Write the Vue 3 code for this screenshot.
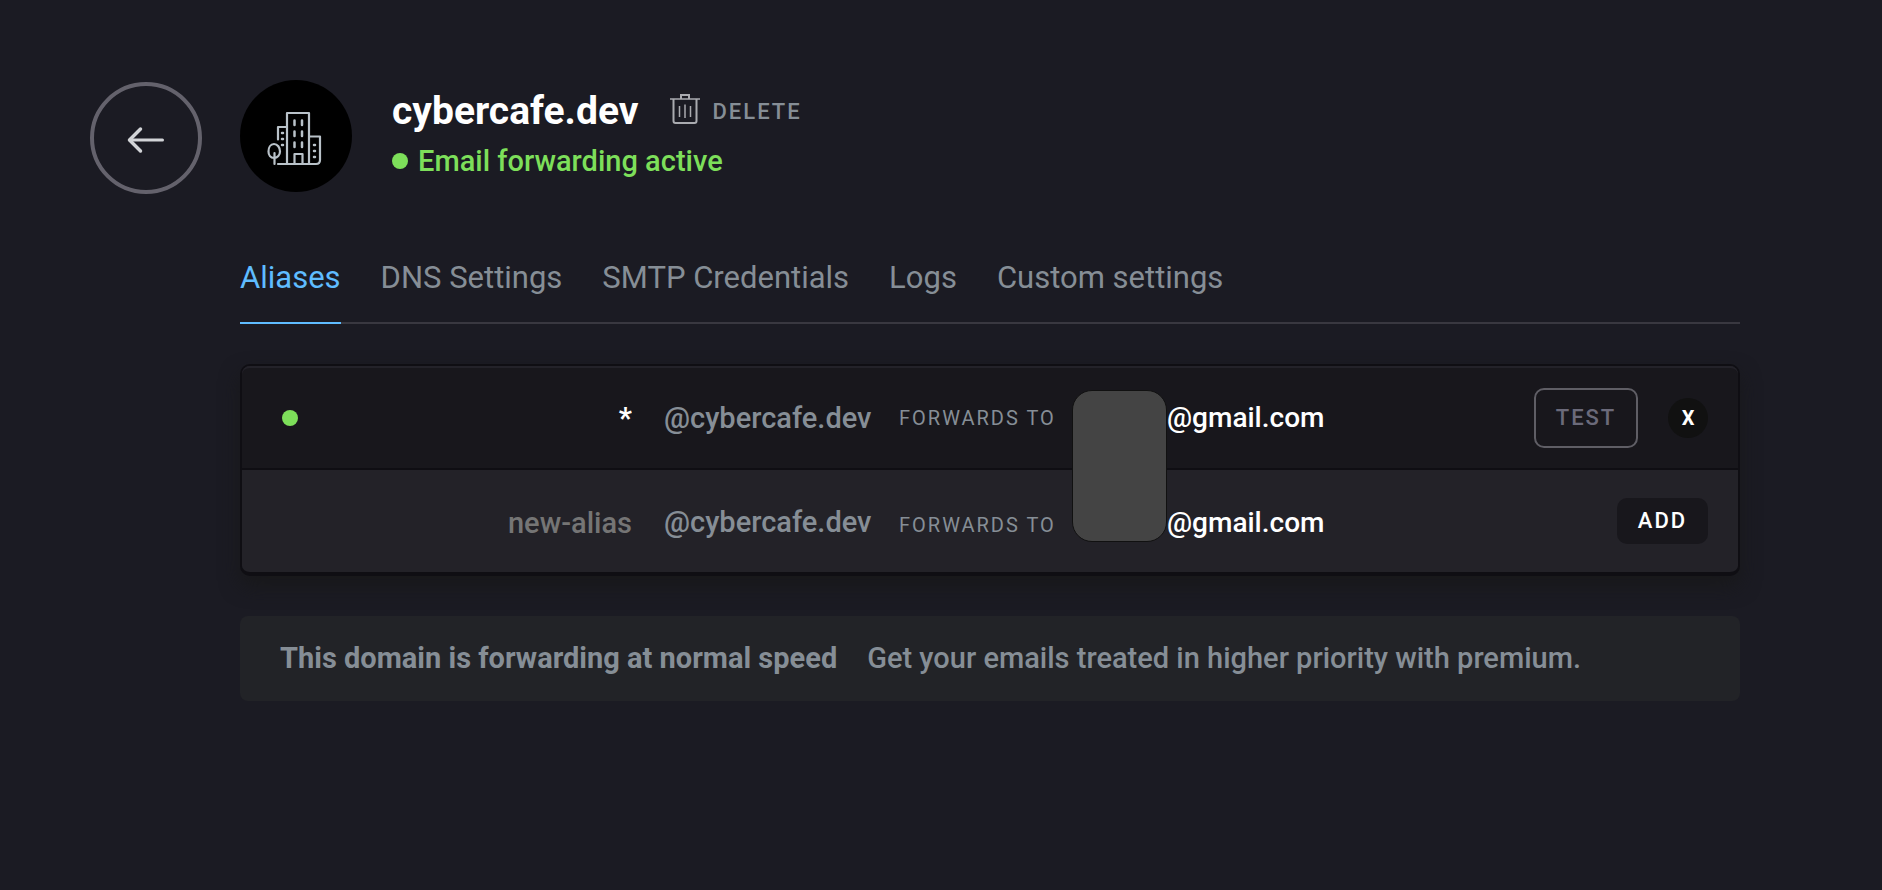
<script setup>
import { ref } from 'vue'

const tabs = ['Aliases', 'DNS Settings', 'SMTP Credentials', 'Logs', 'Custom settings']
const activeTab = ref('Aliases')
const alias = ref('*')
const newAlias = ref('')
const recipient = ref('@gmail.com')
const newRecipient = ref('@gmail.com')
</script>

<template>
  <main class="page">
    <button class="back" type="button" aria-label="Back to domains">
      <svg width="38" height="28" viewBox="0 0 38 28" fill="none" stroke="#d2d4d7" stroke-linecap="round" stroke-linejoin="round">
        <path d="M3 14H35.500" stroke-width="3" />
        <path d="M13.500 3L2.500 14L13.500 25" stroke-width="3.500" />
      </svg>
    </button>

    <div class="content">
      <header class="domain">
        <div class="avatar">
          <svg width="56" height="56" viewBox="0 0 56 56" fill="none" stroke="#b9c2c9" stroke-width="2.200" stroke-linecap="round" stroke-linejoin="round">
            <path d="M20 53V3H42V53" />
            <path d="M20 17H11V29.500" />
            <path d="M42 26.500H53V50Q53 54 49 54H11" />
            <path d="M27.500 53V44H35.500V53" />
            <path d="M27.500 10.500V15M35 10.500V15M27.500 21.500V26M35 21.500V26M27.500 32.500V37M35 32.500V37" stroke-width="2.500" />
            <path d="M15 23H16M15 29H16M15 35H16M47 35H48M47 41H48M47 47H48" stroke-width="2.500" />
            <path d="M7 34C10.500 34 13 37.500 13 41.500C13 45 10.500 48 7 48C3.500 48 1.500 45 1.500 41.500C1.500 37.500 3.500 34 7 34ZM7.500 43V54" />
          </svg>
        </div>
        <div class="summary">
          <div class="title-row">
            <h1>cybercafe.dev</h1>
            <button class="delete" type="button">
              <svg width="30" height="34" viewBox="0 0 30 34" fill="none" stroke="#aaabb0" stroke-width="2">
                <path d="M0 5H30" stroke-width="1.500" />
                <path d="M11 5V1H19V5" />
                <path d="M3.500 5V27Q3.500 29 5.500 29H24.500Q26.500 29 26.500 27V5" />
                <path d="M9.500 12V23M15 10.500V24M20.500 12V23" stroke-width="1.500" />
              </svg>
              <span>DELETE</span>
            </button>
          </div>
          <p class="status"><span class="dot"></span>Email forwarding active</p>
        </div>
      </header>

      <nav class="tabs">
        <a
          v-for="tab in tabs"
          :key="tab"
          href="#"
          :class="{ active: tab === activeTab }"
          @click.prevent="activeTab = tab"
        >{{ tab }}</a>
      </nav>

      <section class="card">
        <form class="row saved" @submit.prevent>
          <span class="dot"></span>
          <input v-model="alias" class="alias" type="text" aria-label="Alias" />
          <span class="host">@cybercafe.dev</span>
          <span class="forwards">FORWARDS TO</span>
          <input v-model="recipient" class="recipient" type="text" aria-label="Recipient" />
          <div class="actions">
            <button class="test" type="button">TEST</button>
            <button class="remove" type="button" aria-label="Remove alias">X</button>
          </div>
        </form>
        <form class="row draft" @submit.prevent>
          <span></span>
          <input v-model="newAlias" class="alias" type="text" placeholder="new-alias" aria-label="New alias" />
          <span class="host">@cybercafe.dev</span>
          <span class="forwards">FORWARDS TO</span>
          <input v-model="newRecipient" class="recipient" type="text" aria-label="New recipient" />
          <div class="actions">
            <button class="add" type="submit">ADD</button>
          </div>
        </form>
        <div class="mask"></div>
      </section>

      <p class="notice">
        <strong>This domain is forwarding at normal speed</strong>
        <span>Get your emails treated in higher priority with premium.</span>
      </p>
    </div>
  </main>
</template>

<style>
body {
  margin: 0;
  background: #1b1b23;
}
</style>

<style scoped>
.page {
  display: flex;
  align-items: flex-start;
  gap: 38px;
  min-height: 100vh;
  box-sizing: border-box;
  padding: 80px 142px 80px 90px;
  font-family: Roboto, "Liberation Sans", sans-serif;
  font-size: 29px;
  font-weight: 500;
  line-height: 36px;
  color: #868e96;
}
button,
input {
  margin: 0;
  padding: 0;
  border: 0;
  background: none;
  font: inherit;
  color: inherit;
}
button {
  cursor: pointer;
}
h1,
p {
  margin: 0;
}
.back {
  display: flex;
  align-items: center;
  justify-content: center;
  flex: none;
  width: 112px;
  height: 112px;
  margin-top: 2px;
  padding-top: 4px;
  box-sizing: border-box;
  border: 4px solid #64626c;
  border-radius: 50%;
}
.content {
  flex: 1;
  min-width: 0;
}
.domain {
  display: flex;
  align-items: center;
  gap: 40px;
}
.avatar {
  display: flex;
  align-items: center;
  justify-content: center;
  flex: none;
  width: 112px;
  height: 112px;
  padding-top: 4px;
  padding-right: 2px;
  box-sizing: border-box;
  border-radius: 50%;
  background: #000;
}
.title-row {
  display: flex;
  align-items: center;
  gap: 32px;
}
h1 {
  font-size: 39px;
  line-height: 50px;
  font-weight: 700;
  color: #fff;
}
.delete {
  display: flex;
  align-items: center;
  gap: 12px;
  font-size: 22px;
  line-height: 30px;
  letter-spacing: 2px;
}
.delete span {
  padding-top: 2px;
}
.status {
  display: flex;
  align-items: center;
  gap: 10px;
  line-height: 50px;
  color: #7ddf5a;
}
.dot {
  width: 16px;
  height: 16px;
  border-radius: 50%;
  background: #7ddf5a;
}
.tabs {
  display: flex;
  gap: 40px;
  margin-top: 56px;
  border-bottom: 2px solid #393840;
}
.tabs a {
  padding: 12px 0 26px;
  margin-bottom: -2px;
  border-bottom: 2px solid transparent;
  font-size: 31px;
  font-weight: 400;
  color: inherit;
  text-decoration: none;
}
.tabs .active {
  border-color: #5fbcff;
  color: #5fbcff;
}
.card {
  position: relative;
  margin-top: 40px;
  border: 2px solid #0f0e13;
  border-bottom-width: 4px;
  border-radius: 10px;
  background: #232228;
  box-shadow: 0 10px 20px #18181a;
}
.row {
  display: grid;
  grid-template-columns: 16px 310px 207px 156px 1fr auto;
  align-items: center;
  column-gap: 28px;
  height: 102px;
  box-sizing: border-box;
  padding: 0 30px 0 40px;
}
.saved {
  height: 104px;
  border-top: 2px solid #232229;
  border-bottom: 2px solid #0f0e13;
  border-radius: 8px 8px 0 0;
  background: #18171c;
}
.alias {
  min-width: 0;
  padding-right: 4px;
  text-align: right;
  color: #fff;
}
.saved .alias {
  font-weight: 700;
}
.alias::placeholder {
  color: #757575;
  opacity: 1;
}
.recipient {
  min-width: 0;
  padding-left: 84px;
  font-size: 28px;
  color: #fff;
}
.host {
  white-space: nowrap;
}
.forwards {
  font-size: 20px;
  font-weight: 400;
  letter-spacing: 2px;
  white-space: nowrap;
}
.draft input {
  padding-top: 4px;
}
.draft .host {
  padding-top: 2px;
}
.draft .forwards {
  padding-top: 8px;
}
.actions {
  display: flex;
  align-items: center;
  gap: 30px;
}
.actions button {
  font-size: 22px;
  letter-spacing: 2px;
}
.actions .test {
  width: 104px;
  height: 60px;
  border: 2px solid #5f5e65;
  border-radius: 10px;
  color: #6b6a7a;
}
.actions .remove {
  width: 40px;
  height: 40px;
  border-radius: 50%;
  background: #111;
  font-size: 20px;
  font-weight: 700;
  letter-spacing: 0;
  color: #fff;
}
.actions .add {
  width: 91px;
  height: 46px;
  border-radius: 10px;
  background: #18171c;
  color: #fff;
}
.mask {
  position: absolute;
  top: 24px;
  left: 830px;
  width: 93px;
  height: 150px;
  border: 1px solid #111;
  border-radius: 20px;
  background: #444;
}
.notice {
  display: flex;
  gap: 30px;
  margin-top: 40px;
  padding: 24px 40px 25px;
  border-radius: 8px;
  background: #222327;
}
</style>
